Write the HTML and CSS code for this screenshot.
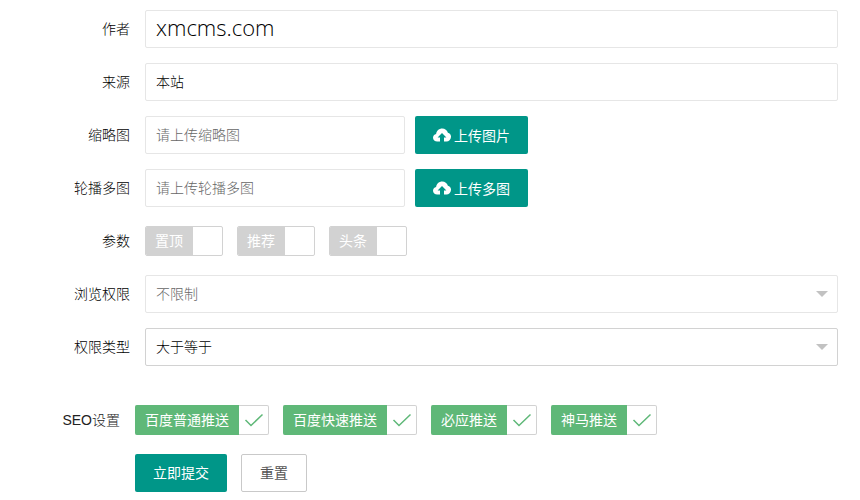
FILE: index.html
```html
<!DOCTYPE html>
<html lang="zh-CN">
<head>
<meta charset="utf-8">
<title>表单</title>
<link rel="stylesheet" href="styles.css">
</head>
<body>
<form class="form">
  <div class="row">
    <div class="label">作者</div>
    <div class="field author">xmcms.com</div>
  </div>
  <div class="row">
    <div class="label">来源</div>
    <div class="field">本站</div>
  </div>
  <div class="row">
    <div class="label">缩略图</div>
    <div class="field short placeholder">请上传缩略图</div>
    <div class="btn upload"><svg class="cloud" viewBox="0 0 18 14"><path d="M4.2 13.6C1.9 13.6 0 11.9 0 9.7c0-1.9 1.3-3.4 3.1-3.8C3.6 2.6 6.1.4 9.2.4c2.7 0 5 1.8 5.7 4.3 2 .5 3.3 2.3 3.1 4.4-.2 2.5-2.1 4.5-4.6 4.5H11V9.4h2.4L9 4.9 4.6 9.4H7v4.2H4.2z"/></svg>上传图片</div>
  </div>
  <div class="row">
    <div class="label">轮播多图</div>
    <div class="field short placeholder">请上传轮播多图</div>
    <div class="btn upload"><svg class="cloud" viewBox="0 0 18 14"><path d="M4.2 13.6C1.9 13.6 0 11.9 0 9.7c0-1.9 1.3-3.4 3.1-3.8C3.6 2.6 6.1.4 9.2.4c2.7 0 5 1.8 5.7 4.3 2 .5 3.3 2.3 3.1 4.4-.2 2.5-2.1 4.5-4.6 4.5H11V9.4h2.4L9 4.9 4.6 9.4H7v4.2H4.2z"/></svg>上传多图</div>
  </div>
  <div class="row">
    <div class="label">参数</div>
    <div class="toggles">
      <div class="toggle"><span class="toggle-text">置顶</span></div>
      <div class="toggle"><span class="toggle-text">推荐</span></div>
      <div class="toggle"><span class="toggle-text">头条</span></div>
    </div>
  </div>
  <div class="row">
    <div class="label">浏览权限</div>
    <div class="field select placeholder">不限制<span class="caret"></span></div>
  </div>
  <div class="row">
    <div class="label">权限类型</div>
    <div class="field select strong">大于等于<span class="caret"></span></div>
  </div>
  <div class="row seo">
    <div class="label seo-label">SEO设置</div>
    <div class="checks">
      <div class="check"><span class="check-text">百度普通推送</span><span class="check-box"><svg viewBox="0 0 20 14"><path d="M1.5 7l5.5 5.5L18.5 1.5"/></svg></span></div>
      <div class="check"><span class="check-text">百度快速推送</span><span class="check-box"><svg viewBox="0 0 20 14"><path d="M1.5 7l5.5 5.5L18.5 1.5"/></svg></span></div>
      <div class="check"><span class="check-text">必应推送</span><span class="check-box"><svg viewBox="0 0 20 14"><path d="M1.5 7l5.5 5.5L18.5 1.5"/></svg></span></div>
      <div class="check"><span class="check-text">神马推送</span><span class="check-box"><svg viewBox="0 0 20 14"><path d="M1.5 7l5.5 5.5L18.5 1.5"/></svg></span></div>
    </div>
  </div>
  <div class="actions">
    <div class="btn submit">立即提交</div>
    <div class="btn reset">重置</div>
  </div>
</form>
</body>
</html>
```
FILE: styles.css
```css
* { box-sizing: border-box; }
html, body { margin: 0; padding: 0; background: #fff; }
body {
  width: 860px;
  height: 500px;
  overflow: hidden;
  font-family: "Noto Sans CJK SC", "Noto Sans", sans-serif;
  font-size: 14px;
  font-weight: 300;
  color: #000;
}
.form { padding: 10px 22px 0 0; display: flex; flex-direction: column; gap: 15px; }
.row { display: flex; align-items: center; height: 38px; }
.label { width: 130px; padding-bottom: 2px; text-align: right; flex: none; margin-right: 15px; }
.field {
  flex: 1;
  height: 38px;
  line-height: 34px;
  padding-left: 10px;
  border: 1px solid #e6e6e6;
  border-radius: 2px;
  background: #fff;
  position: relative;
}
.author { font-size: 22px; line-height: 32px; font-family: "Open Sans", sans-serif; }
.short { flex: none; width: 260px; }
.placeholder { color: #666; }
.strong { border-color: #d2d2d2; }
.btn {
  height: 38px;
  line-height: 36px;
  border-radius: 2px;
  text-align: center;
  flex: none;
}
.upload {
  width: 113px;
  margin-left: 10px;
  background: #009688;
  color: #fff;
  font-weight: 400;
  display: flex;
  align-items: center;
  justify-content: center;
  gap: 3px;
}
.cloud { width: 18px; height: 14px; fill: #fff; }
.toggles { display: flex; gap: 14px; }
.toggle {
  width: 78px;
  height: 30px;
  border: 1px solid #d2d2d2;
  border-radius: 2px;
  background: #fff;
  overflow: hidden;
}
.toggle-text {
  display: block;
  width: 47px;
  height: 28px;
  line-height: 26px;
  padding-left: 9px;
  background: #d2d2d2;
  color: #fff;
  font-weight: 400;
}
.caret {
  position: absolute;
  right: 9px;
  top: 15px;
  width: 0;
  height: 0;
  border-style: solid;
  border-width: 6px 6px 0;
  border-color: #c2c2c2 transparent transparent;
}
.seo { height: 30px; margin-top: 24px; margin-bottom: 4px; }
.seo-label { width: 120px; font-family: "Liberation Sans", "Noto Sans CJK SC", sans-serif; color: #222; }
.checks { display: flex; gap: 14px; }
.check {
  display: flex;
  height: 30px;
  border: 1px solid #d2d2d2;
  border-left: 0;
  border-radius: 2px;
  background: #fff;
}
.check-text {
  margin: -1px 0;
  padding: 0 10px;
  line-height: 28px;
  background: #5fb878;
  color: #fff;
  font-weight: 400;
  border-radius: 2px 0 0 2px;
}
.check-box { width: 29px; display: flex; align-items: center; justify-content: center; }
.check-box svg { width: 20px; height: 14px; fill: none; stroke: #5fb878; stroke-width: 1.5; }
.actions { display: flex; gap: 14px; padding-left: 135px; }
.submit { width: 92px; background: #009688; color: #fff; font-weight: 400; }
.reset { width: 66px; border: 1px solid #c9c9c9; color: #555; font-weight: 400; line-height: 34px; }
```
